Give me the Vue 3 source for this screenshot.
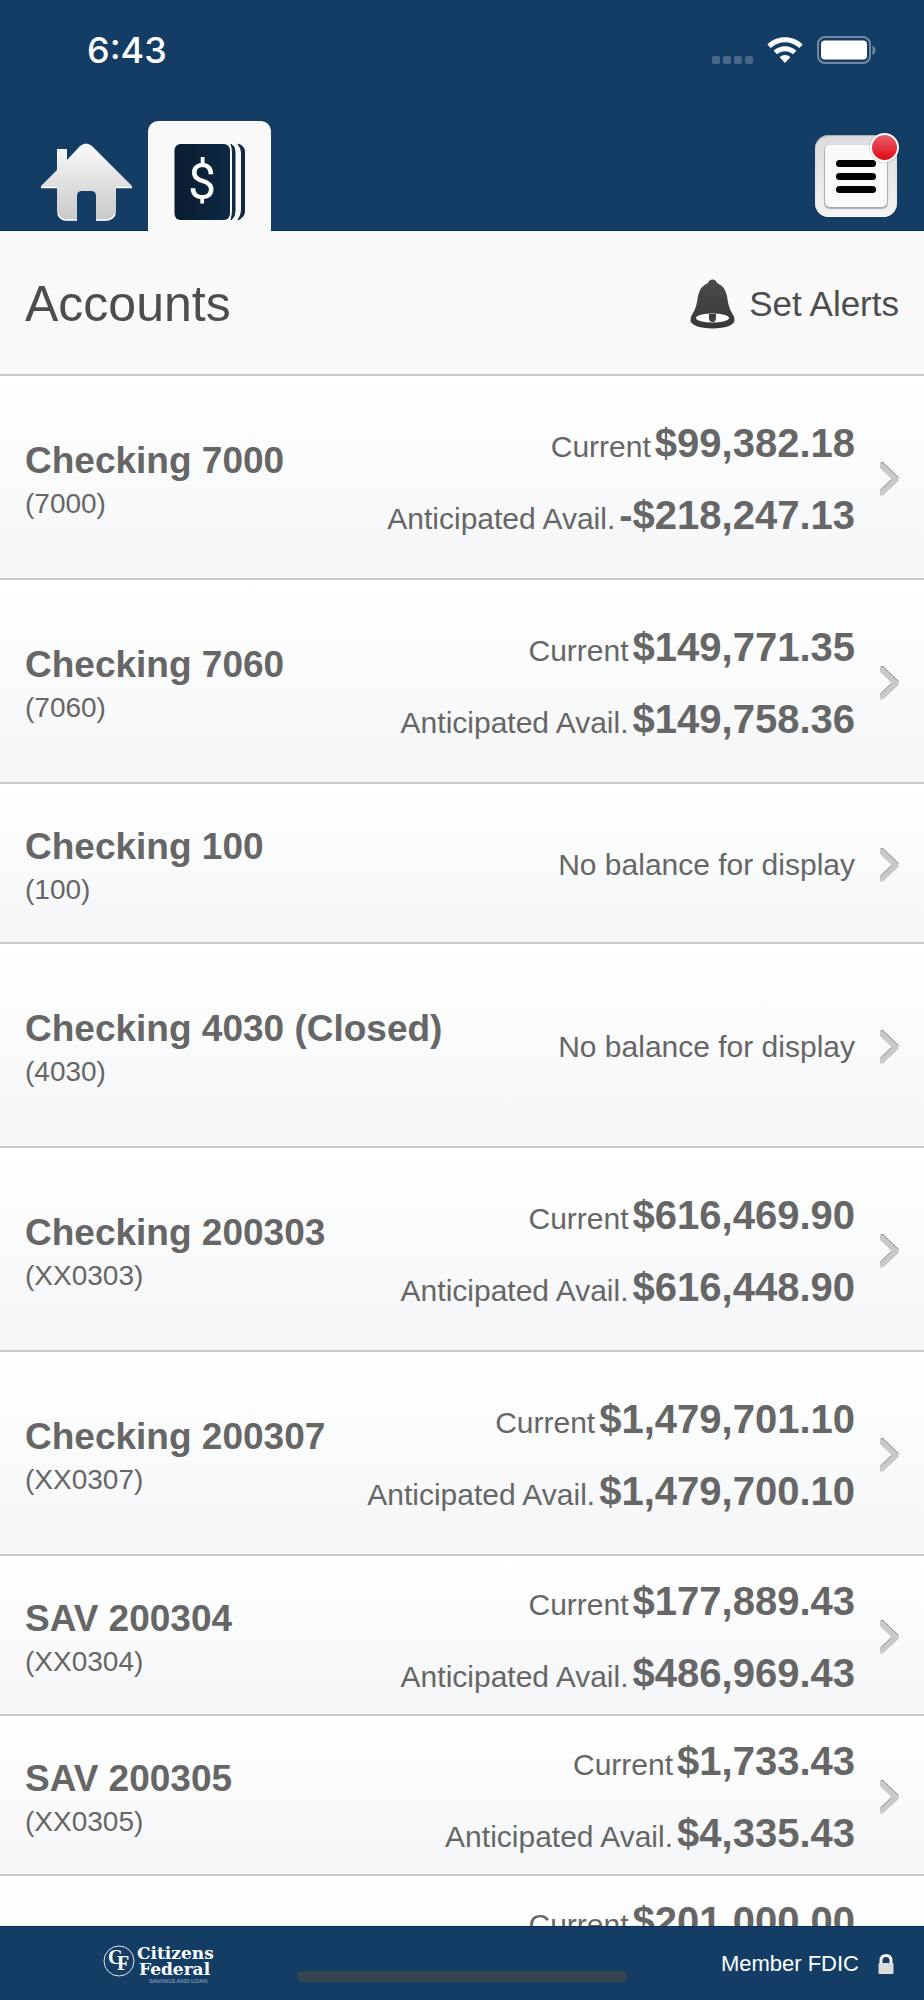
<template>
  <div class="app">
    <header class="header">
      <div class="status">
        <span class="status-time">6:43</span>
        <div class="status-icons">
          <svg class="status-signal" width="41" height="8" viewBox="0 0 41 8">
            <rect v-for="n in 4" :key="n" :x="(n - 1) * 11" y="0" width="8" height="8" rx="2" fill="#4a6885" />
          </svg>
          <svg class="status-wifi" width="36" height="27" viewBox="0 0 36 27">
            <path d="M0.3 7.4C10 -2.2 26 -2.2 35.7 7.4L32.2 11C24.300 3.300 11.700 3.300 3.800 11Z" fill="#fff" />
            <path d="M6.600 13.700C13 7.600 23 7.600 29.400 13.700L25.900 17.200C21.400 13.200 14.600 13.200 10.100 17.200Z" fill="#fff" />
            <path d="M12.700 20.200C15.700 17.400 20.300 17.400 23.300 20.200L18 26Z" fill="#fff" />
          </svg>
          <svg class="status-battery" width="59" height="28" viewBox="0 0 59 28">
            <rect x="1" y="1" width="52" height="26" rx="7" fill="none" stroke="#7289a1" stroke-width="2" />
            <rect x="4" y="4.500" width="46" height="19" rx="4" fill="#fff" />
            <path d="M55.500 9.500C59.400 11 59.400 17.500 55.500 19Z" fill="#7289a1" />
          </svg>
        </div>
      </div>

      <nav class="tabs">
        <a href="#home" class="tab" aria-label="Home">
          <svg width="92" height="78" viewBox="0 0 92 78">
            <defs>
              <linearGradient id="home-fill" x1="0" y1="0" x2="0" y2="1">
                <stop offset="0" stop-color="#fafafa" />
                <stop offset="1" stop-color="#c8c8c8" />
              </linearGradient>
            </defs>
            <path d="M0 45V43L16 27V6H26V17L39 3Q45 -2 51 3L91 43V45H75V69Q74 77 65 77.500H55V53Q55 48 50 48H41Q36 48 36 53V77.500H25Q17 76 16 69V45Z" fill="url(#home-fill)" />
            <path d="M0 44.500H16M75 44.500H91M17 71Q19 76.500 25 77H36M55 77H65Q72 76.500 74 71" fill="none" stroke="#fff" stroke-width="1.500" />
          </svg>
        </a>
        <a href="#accounts" class="tab tab--active" aria-label="Accounts">
          <svg width="72" height="78" viewBox="0 0 72 78">
            <defs>
              <linearGradient id="book-fill" x1="0" y1="0" x2="1" y2="0">
                <stop offset="0" stop-color="#0a1c30" />
                <stop offset="1" stop-color="#0e2944" />
              </linearGradient>
            </defs>
            <rect x="0.500" y="1" width="55.500" height="76" rx="6" fill="url(#book-fill)" />
            <path d="M57 1Q61 3 61 9V68Q61 74 57 77Q58.500 72 58.500 67V10Q58.500 5 57 1Z" fill="#0e2944" stroke="#0e2944" />
            <path d="M64 1Q70.500 3 70.500 9V68Q70.500 74 64 77Q67.500 72 67.500 67V10Q67.500 5 64 1Z" fill="#0e2944" stroke="#0e2944" />
            <text x="28" y="56" text-anchor="middle" class="book-sign">$</text>
          </svg>
        </a>
        <button class="menu" type="button" aria-label="Menu">
          <span class="menu-face">
            <span class="menu-line"></span>
            <span class="menu-line"></span>
            <span class="menu-line"></span>
          </span>
          <span class="menu-badge"></span>
        </button>
      </nav>
    </header>

    <div class="heading">
      <h1 class="heading-title">Accounts</h1>
      <button class="alerts" type="button">
        <svg width="45" height="50" viewBox="0 0 45 50">
          <defs>
            <linearGradient id="bell-fill" x1="0" y1="0" x2="0" y2="1">
              <stop offset="0" stop-color="#4b4b4b" />
              <stop offset="1" stop-color="#383838" />
            </linearGradient>
          </defs>
          <path d="M18 4Q19 0.500 22.500 0.500Q26 0.500 27 4Q35 7 37 17Q38.500 29 42 34Q45 38 44.500 42Q42 49 22.500 49.500Q3 49 0.500 42Q0 38 3 34Q6.500 29 8 17Q10 7 18 4Z" fill="url(#bell-fill)" />
          <ellipse cx="22.500" cy="39" rx="16.500" ry="4.500" fill="#fff" />
          <path d="M19 35H26V39Q26 43 22.500 43Q19 43 19 39Z" fill="#404040" />
        </svg>
        Set Alerts
      </button>
    </div>

    <main class="accounts">
      <a
        v-for="account in accounts"
        :key="account.number"
        href="#account"
        class="account"
        :class="{ 'account--tall': account.tall }"
      >
        <div class="account-info">
          <span class="account-name">{{ account.name }}</span>
          <span class="account-number">{{ account.number }}</span>
        </div>
        <div v-if="account.balances" class="balances">
          <div v-for="balance in account.balances" :key="balance.label" class="balance">
            <span class="balance-label">{{ balance.label }}</span>
            <strong class="balance-amount">{{ balance.amount }}</strong>
          </div>
        </div>
        <span v-else class="no-balance">No balance for display</span>
        <svg class="chevron" width="19" height="34" viewBox="0 0 19 34">
          <path d="M0 0.500H3L18.500 15V19L3 33.500H0V28L11.500 17L0 6Z" fill="#c9c9c9" />
          <path d="M1 0.500H3L18.500 15.500M0.500 28L11.500 17.500" fill="none" stroke="#8c8c8c" />
        </svg>
      </a>
    </main>

    <footer class="footer">
      <svg class="logo" width="118" height="42" viewBox="0 0 118 42">
        <circle cx="16" cy="18" r="15" fill="none" stroke="#dfe7ee" stroke-width="1" />
        <text x="5" y="21" class="logo-letter">C</text>
        <text x="14" y="27" class="logo-letter">F</text>
        <text x="34" y="16" class="logo-name">Citizens</text>
        <text x="36" y="32" class="logo-name">Federal</text>
        <text x="46" y="40" class="logo-tag">SAVINGS AND LOAN</text>
      </svg>
      <span class="home-bar"></span>
      <div class="fdic">
        Member FDIC
        <svg width="16" height="20" viewBox="0 0 16 20">
          <path d="M3 9V6.500Q3 1.500 8 1.500Q13 1.500 13 6.500V9" fill="none" stroke="#f4f4f4" stroke-width="3" />
          <rect x="0.500" y="9" width="15" height="11" rx="1" fill="#dcdcdc" />
        </svg>
      </div>
    </footer>
  </div>
</template>

<script setup>
import { ref } from 'vue';

function both(current, available) {
  return [
    { label: 'Current', amount: current },
    { label: 'Anticipated Avail.', amount: available },
  ];
}

const accounts = ref([
  { name: 'Checking 7000', number: '(7000)', tall: true, balances: both('$99,382.18', '-$218,247.13') },
  { name: 'Checking 7060', number: '(7060)', tall: true, balances: both('$149,771.35', '$149,758.36') },
  { name: 'Checking 100', number: '(100)' },
  { name: 'Checking 4030 (Closed)', number: '(4030)', tall: true },
  { name: 'Checking 200303', number: '(XX0303)', tall: true, balances: both('$616,469.90', '$616,448.90') },
  { name: 'Checking 200307', number: '(XX0307)', tall: true, balances: both('$1,479,701.10', '$1,479,700.10') },
  { name: 'SAV 200304', number: '(XX0304)', balances: both('$177,889.43', '$486,969.43') },
  { name: 'SAV 200305', number: '(XX0305)', balances: both('$1,733.43', '$4,335.43') },
  { name: '', number: '', balances: [{ label: 'Current', amount: '$201,000.00' }] },
]);
</script>

<style>
body {
  margin: 0;
}
</style>

<style scoped>
.app {
  display: flex;
  flex-direction: column;
  height: 100vh;
  overflow: hidden;
  background: #fff;
  color: #666;
  font-family: "Liberation Sans", Arial, sans-serif;
}
.app * {
  box-sizing: border-box;
}
a {
  color: inherit;
  text-decoration: none;
}
button {
  border: none;
  background: none;
  padding: 0;
  font-family: inherit;
  cursor: pointer;
}
svg {
  display: block;
  flex: none;
}
.header {
  flex: none;
  background: #143d66;
  box-shadow: inset 0 -1px 0 #082f58;
}
.status {
  display: flex;
  align-items: center;
  justify-content: space-between;
  height: 100px;
  padding: 0 48px 0 87px;
}
.status-time {
  color: #fff;
  font-family: Inter, sans-serif;
  font-size: 36px;
  font-weight: 500;
}
.status-icons {
  display: flex;
  align-items: flex-end;
  gap: 14px;
}
.tabs {
  display: flex;
  align-items: flex-end;
  height: 131px;
  padding: 0 27px 0 26px;
}
.tab {
  display: flex;
  align-items: center;
  justify-content: center;
  width: 122px;
  height: 110px;
  padding-top: 12px;
}
.tab--active {
  width: 123px;
  border-radius: 10px 10px 0 0;
  background: #f9f9f9;
}
.book-sign {
  fill: #fff;
  font-family: Roboto, sans-serif;
  font-size: 50px;
}
.menu {
  position: relative;
  width: 82px;
  height: 82px;
  margin: 0 0 14px auto;
  padding: 10px;
  border-radius: 14px;
  background: linear-gradient(#dcdcdc, #f3f4f4);
  box-shadow: inset 0 1px 1px #aaa, inset 0 -1px 1px #fff;
}
.menu-face {
  display: flex;
  flex-direction: column;
  align-items: center;
  justify-content: center;
  gap: 6px;
  height: 62px;
  border-radius: 5px;
  background: #fafafa;
  box-shadow: 0 1px 1px 1px #aaa;
}
.menu-line {
  width: 40px;
  height: 7px;
  border-radius: 4px;
  background: #000;
}
.menu-badge {
  position: absolute;
  top: -2px;
  right: -2px;
  width: 29px;
  height: 29px;
  border: 2px solid #fff;
  border-radius: 50%;
  background: linear-gradient(#e8606c, #e00914);
  box-shadow: 0 0 2px #0006;
}
.heading {
  display: flex;
  flex: none;
  align-items: center;
  justify-content: space-between;
  height: 143px;
  padding: 3px 25px 0;
  background: #f9f9f9;
  color: #4d4d4d;
}
.heading-title {
  margin: 0;
  font-size: 50px;
  font-weight: 400;
}
.alerts {
  display: flex;
  align-items: center;
  gap: 14px;
  color: #4d4d4d;
  font-size: 35px;
}
.accounts {
  flex: 1;
  min-height: 0;
  overflow-y: auto;
  scrollbar-width: none;
}
.account {
  display: flex;
  align-items: center;
  min-height: 160px;
  padding: 4px 25px 0;
  border-top: 2px solid #c9c9c9;
  background: linear-gradient(#fff, #f4f6f7);
}
.account--tall {
  min-height: 204px;
}
.account-info {
  display: flex;
  flex: 1;
  flex-direction: column;
}
.account-name {
  font-size: 37px;
  font-weight: 700;
  line-height: 50px;
}
.account-number {
  font-size: 28px;
  line-height: 36px;
}
.balances {
  min-height: 144px;
}
.balance {
  display: flex;
  align-items: baseline;
  justify-content: flex-end;
  gap: 4px;
  height: 72px;
  line-height: 72px;
}
.balance-label {
  font-size: 30px;
  line-height: 36px;
}
.no-balance {
  font-size: 30px;
}
.balance-amount {
  font-size: 40px;
}
.chevron {
  margin-left: 25px;
}
.footer {
  position: relative;
  display: flex;
  flex: none;
  align-items: center;
  justify-content: space-between;
  height: 74px;
  padding: 0 30px 0 103px;
  border-top: 1px solid #082f58;
  background: #143d66;
  color: #fff;
}
.logo-letter,
.logo-name {
  fill: #fff;
  font-family: "Liberation Serif", serif;
  font-size: 20px;
  font-weight: 700;
}
.logo-name {
  font-family: "DejaVu Serif", serif;
  font-size: 17px;
}
.logo-tag {
  fill: #9fb2c5;
  font-size: 6px;
}
.home-bar {
  position: absolute;
  bottom: 18px;
  left: 50%;
  width: 330px;
  height: 11px;
  margin-left: -165px;
  border-radius: 6px;
  background: #36444f;
}
.fdic {
  display: flex;
  align-items: center;
  gap: 19px;
  font-size: 22px;
}
</style>
